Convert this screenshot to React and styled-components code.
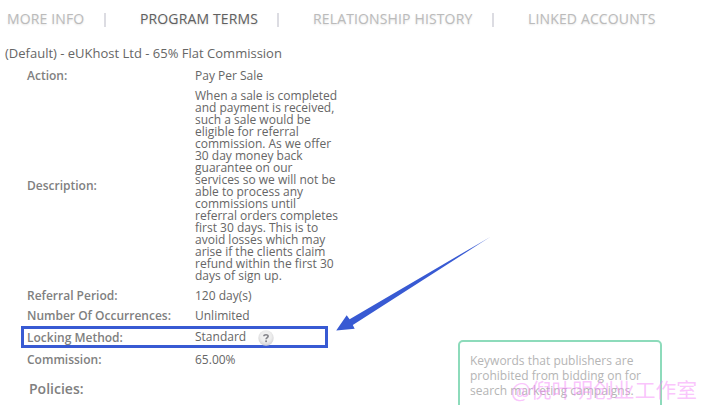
import React from "react";
import styled, { createGlobalStyle } from "styled-components";

const tabs = [
  { name: "MORE INFO", width: 133 },
  { name: "PROGRAM TERMS", width: 173, active: true },
  { name: "RELATIONSHIP HISTORY", width: 215 },
  { name: "LINKED ACCOUNTS", width: 165 },
];

const description = `When a sale is completed and payment is received,
such a sale would be eligible for referral commission. As we offer 30 day
money back guarantee on our services so we will not be able to process any
commissions until referral orders completes first 30 days. This is to avoid
losses which may arise if the clients claim refund within the first 30 days
of sign up.`;

const HelpIcon = () => (
  <Help viewBox="0 0 16 16">
    <defs>
      <radialGradient id="helpFill" cx="50%" cy="40%" r="60%">
        <stop offset="0" stopColor="#f6f6f6" />
        <stop offset="0.6" stopColor="#ececec" />
        <stop offset="1" stopColor="#d0d0d2" />
      </radialGradient>
    </defs>
    <circle cx="8" cy="8" r="7.7" fill="url(#helpFill)" />
    <path
      d="M5.9 6.2C6 4.3 10.2 4.2 10.1 6.3C10.1 7.6 8.2 7.6 8.1 9.3"
      fill="none"
      stroke="#85858a"
      strokeWidth="1.7"
    />
    <rect x="7.2" y="10.4" width="1.8" height="1.7" fill="#85858a" />
  </Help>
);

const App = () => {
  return (
    <Page>
      <GlobalStyle />
      <Tabs>
        {tabs.map((tab, i) => (
          <Tab key={tab.name} $width={tab.width} $active={tab.active}>
            <span>{tab.name}</span>
            {i < tabs.length - 1 && <Divider />}
          </Tab>
        ))}
      </Tabs>
      <Main>
        <Terms>
          <Title>(Default) - eUKhost Ltd - 65% Flat Commission</Title>
          <Row>
            <Label>Action:</Label>
            <Value>Pay Per Sale</Value>
          </Row>
          <Row>
            <Label>Description:</Label>
            <Value>{description}</Value>
          </Row>
          <Row>
            <Label>Referral Period:</Label>
            <Value>120 day(s)</Value>
          </Row>
          <Row>
            <Label>Number Of Occurrences:</Label>
            <Value>Unlimited</Value>
          </Row>
          <LockingRow>
            <LockingLabel>Locking Method:</LockingLabel>
            <Method>Standard</Method>
            <HelpIcon />
          </LockingRow>
          <Row>
            <Label>Commission:</Label>
            <Value>65.00%</Value>
          </Row>
          <Policies>Policies:</Policies>
        </Terms>
        <Keywords>
          Keywords that publishers are prohibited from bidding on for search
          marketing campaigns.
        </Keywords>
      </Main>
      <Arrow viewBox="0 0 160 100">
        <defs>
          <linearGradient id="arrowFill" x1="0" y1="1" x2="1" y2="0">
            <stop offset="0.85" stopColor="#385ad3" />
            <stop offset="1" stopColor="#385ad3" stopOpacity="0.6" />
          </linearGradient>
        </defs>
        <path
          d="M6.2 100.6L16.7 85.3L19.6 89.2L161 6.4L22.8 95L24.7 98.7Z"
          fill="url(#arrowFill)"
        />
      </Arrow>
      <Watermark>@倪叶明创业工作室</Watermark>
    </Page>
  );
};

const GlobalStyle = createGlobalStyle`
  * {
    box-sizing: border-box;
  }
  body {
    margin: 0;
    background: #fff;
    overflow: hidden;
  }
`;

const Page = styled.div`
  position: relative;
  width: 705px;
  height: 405px;
  overflow: hidden;
  color: #666;
  font-family: "Open Sans", sans-serif;
  font-size: 12px;
  line-height: 12px;
`;

const Tabs = styled.div`
  display: flex;
  height: 44px;
  padding: 9px 0 0 7px;
`;

const Tab = styled.div`
  display: flex;
  justify-content: space-between;
  flex: 0 0 auto;
  width: ${(props) => props.$width}px;
  padding-right: 34px;
  color: ${(props) => (props.$active ? "#606060" : "#bbb")};
  font-size: 14px;
  line-height: 20px;
  letter-spacing: 0.14px;
  white-space: nowrap;
  text-shadow: 0 1px 2px ${(props) => (props.$active ? "#ddd" : "#e2e2e2")};
`;

const Divider = styled.div`
  width: 2px;
  height: 14px;
  margin-top: 4px;
  background: #dcdce2;
`;

const Main = styled.div`
  display: flex;
  align-items: flex-start;
`;

const Terms = styled.div`
  width: 458px;
`;

const Title = styled.div`
  height: 22px;
  padding-left: 5px;
  font-size: 13px;
  line-height: 19px;
`;

const Row = styled.div`
  display: flex;
  align-items: center;
  padding: 4px 0 4px 27px;
`;

const LockingRow = styled(Row)`
  width: 307px;
  height: 22px;
  margin: 0 0 2px 21px;
  padding: 0 0 0 3px;
  border: 3px solid #385ad3;
`;

const Label = styled.div`
  width: 168px;
  color: #808080;
  font-weight: 600;
`;

const LockingLabel = styled(Label)`
  padding-top: 2px;
`;

const Value = styled.div`
  width: 145px;
`;

const Method = styled.div`
  width: 63px;
`;

const Help = styled.svg`
  width: 16px;
  height: 16px;
  margin-top: 1px;
`;

const Policies = styled.div`
  padding: 9px 0 0 29px;
  color: #808080;
  font-size: 14px;
  font-weight: 600;
  line-height: 20px;
`;

const Keywords = styled.div`
  width: 204px;
  height: 80px;
  margin-top: 296px;
  padding: 11px 10px;
  border: 2px solid #8ddbbb;
  border-radius: 5px;
  color: #b5b5b5;
  line-height: 15px;
`;

const Arrow = styled.svg`
  position: absolute;
  left: 330px;
  top: 230px;
  width: 160px;
  height: 100px;
  overflow: visible;
`;

const Watermark = styled.div`
  position: absolute;
  left: 511px;
  top: 377px;
  color: rgba(245, 140, 250, 0.5);
  font-family: "Noto Sans CJK SC", sans-serif;
  font-size: 20.8px;
  line-height: 24px;
  white-space: nowrap;
`;

export default App;
